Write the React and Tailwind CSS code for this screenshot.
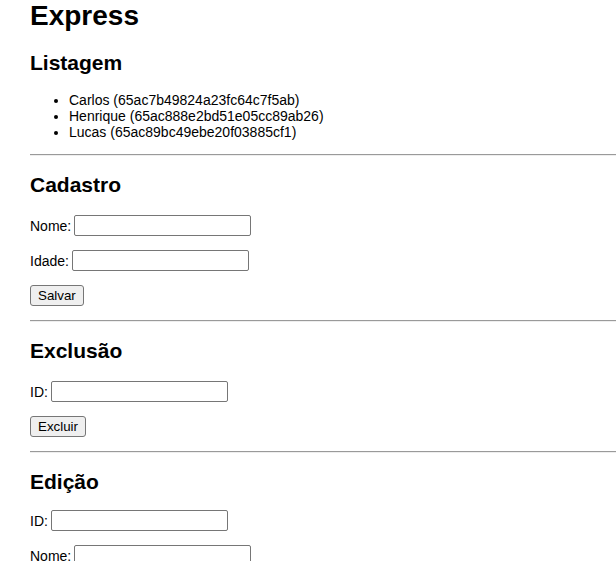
import React from 'react';

const usuarios = [
    { nome: 'Carlos', id: '65ac7b49824a23fc64c7f5ab' },
    { nome: 'Henrique', id: '65ac888e2bd51e05cc89ab26' },
    { nome: 'Lucas', id: '65ac89bc49ebe20f03885cf1' },
];

const Campo = ({ label, className = '' }) => (
    <p className={`flex items-center gap-[3px] h-[21px] leading-[16px] ${className}`}>
        <span>{label}</span>
        <input
            type="text"
            className="w-[177px] h-[21px] px-[2px] bg-white border border-[#767676] rounded-[2px] text-[13.33px] outline-none"
        />
    </p>
);

const Botao = ({ children, className = '' }) => (
    <div className={`flex h-[21px] ${className}`}>
        <button
            type="button"
            className="h-[21px] px-[7px] bg-[#efefef] border border-[#767676] rounded-[3px] text-[13.33px] leading-none text-black"
        >
            {children}
        </button>
    </div>
);

const Linha = ({ className = '' }) => (
    <hr className={`border-t border-t-[#9a9a9a] border-b border-b-[#eeeeee] ${className}`} />
);

const App = () => {
    return (
        <div className="min-h-screen w-full bg-white pl-[30px] text-black text-[14px] font-['Liberation_Sans',Arial,sans-serif]">
            <h1 className="h-[32px] text-[28px] leading-[32px] font-bold">Express</h1>

            {/* Listagem */}
            <h2 className="mt-[19px] text-[21px] leading-[24px] font-bold">Listagem</h2>
            <ul className="mt-[17px] list-disc pl-[39px]">
                {usuarios.map((u) => (
                    <li key={u.id} className="leading-[16px]">
                        {u.nome} ({u.id})
                    </li>
                ))}
            </ul>

            <Linha className="mt-[14px]" />

            {/* Cadastro */}
            <h2 className="mt-[17px] text-[21px] leading-[24px] font-bold">Cadastro</h2>
            <Campo label="Nome:" className="mt-[18px]" />
            <Campo label="Idade:" className="mt-[14px]" />
            <Botao className="mt-[14px]">Salvar</Botao>

            <Linha className="mt-[14px]" />

            {/* Exclusão */}
            <h2 className="mt-[17px] text-[21px] leading-[24px] font-bold">Exclusão</h2>
            <Campo label="ID:" className="mt-[18px]" />
            <Botao className="mt-[14px]">Excluir</Botao>

            <Linha className="mt-[14px]" />

            {/* Edição */}
            <h2 className="mt-[17px] text-[21px] leading-[24px] font-bold">Edição</h2>
            <Campo label="ID:" className="mt-[16px]" />
            <Campo label="Nome:" className="mt-[14px]" />
            <Campo label="Idade:" className="mt-[14px]" />
            <Botao className="mt-[14px] mb-[14px]">Salvar</Botao>
        </div>
    );
};

export default App;
